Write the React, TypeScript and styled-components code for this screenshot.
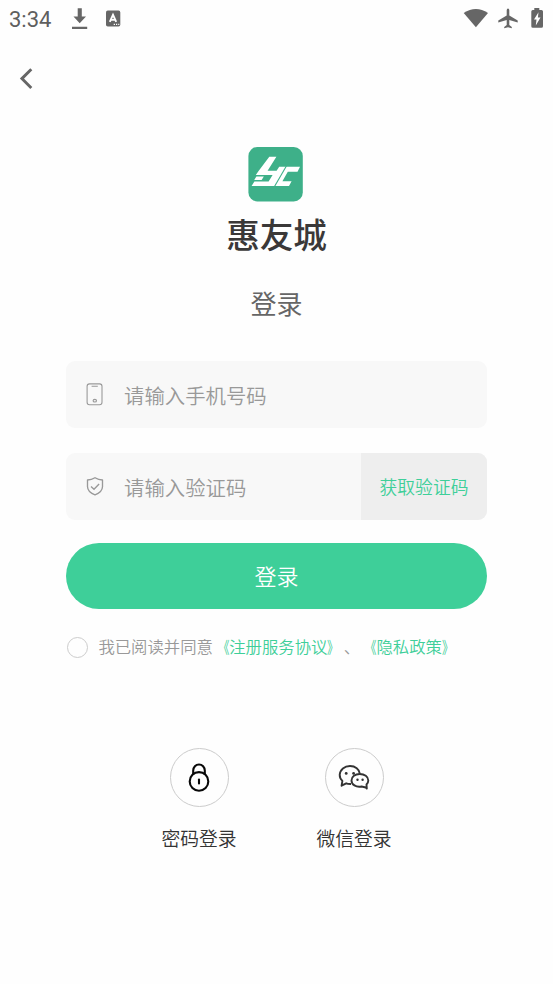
import React from 'react';
import styled, { createGlobalStyle } from 'styled-components';

const Global = createGlobalStyle`
  * { box-sizing: border-box; }
  body { margin: 0; background: #fefefe; font-family: "Noto Sans CJK SC", sans-serif; font-weight: 350; }
  button { font: inherit; border: 0; padding: 0; margin: 0; background: none; }
`;

const Screen = styled.div`
  height: 984px;
  display: flex;
  flex-direction: column;
  align-items: center;
  overflow: hidden;
`;

const StatusBar = styled.header`
  width: 100%;
  height: 40px;
  display: flex;
  align-items: flex-start;
  justify-content: space-between;
`;

const StatusLeft = styled.div`
  display: flex;
  padding-left: 9px;
`;

const Clock = styled.span`
  width: 60px;
  padding-top: 7px;
  font: 400 22px/26px Roboto, sans-serif;
  color: #5f5f5f;
`;

const NavBar = styled.nav`
  width: 100%;
  height: 107px;
  padding: 27px 0 0 18px;
`;

const IconButton = styled.button`
  display: block;
  height: 24px;
`;

const Icon = styled.svg`
  display: block;
  flex: none;
`;

const LogoBox = styled.div`
  margin-right: 2px;
`;

const Brand = styled.h1`
  margin: 6px 0 0;
  height: 52px;
  font-size: 33.6px;
  line-height: 52px;
  font-weight: 500;
  color: #3a3838;
`;

const Heading = styled.h2`
  margin: 23px 0 0;
  height: 40px;
  font-size: 26px;
  line-height: 40px;
  font-weight: 400;
  color: #666;
`;

const Form = styled.form`
  width: 421px;
  margin-top: 38px;
  display: flex;
  flex-direction: column;
`;

const Field = styled.label<{ $gap: number }>`
  height: 67px;
  margin-bottom: ${(p) => p.$gap}px;
  display: flex;
  align-items: center;
  padding-left: 19px;
  border-radius: 9px;
  background: #f8f8f8;
  overflow: hidden;
`;

const Placeholder = styled.span`
  flex: 1;
  margin-left: 19px;
  font-size: 20.4px;
  line-height: 30px;
  color: #999;
`;

const CodeButton = styled.button`
  width: 126px;
  height: 67px;
  padding-bottom: 2px;
  background: #eee;
  color: #3ecf99;
  font-size: 17.8px;
  line-height: 26px;
`;

const Submit = styled.button`
  height: 66px;
  padding-bottom: 2px;
  border-radius: 33px;
  background: #3ecf99;
  color: #fff;
  font-size: 22px;
  line-height: 32px;
`;

const Agreement = styled.div`
  display: flex;
  align-items: center;
  height: 24px;
  margin-top: 26px;
  padding-left: 1.4px;
  font-size: 16.37px;
  line-height: 24px;
  color: #999;
  white-space: nowrap;
`;

const Radio = styled.span`
  width: 21px;
  height: 21px;
  margin-right: 10px;
  border: 1.5px solid #ccc;
  border-radius: 50%;
`;

const AgreementText = styled.span`
  padding-bottom: 2px;
`;

const Link = styled.span`
  color: #3ecf99;
`;

const Bracket = styled.span<{ $side: 'left' | 'right' }>`
  display: inline-block;
  width: 1em;
  font-weight: 400;
  transform: scaleX(0.7);
  transform-origin: ${(p) => (p.$side === 'left' ? 'right' : 'left')} center;
`;

const Alternatives = styled.div`
  width: 310px;
  margin-top: 89px;
  display: grid;
  grid-template-columns: 1fr 1fr;
`;

const Method = styled.button`
  display: flex;
  flex-direction: column;
  align-items: center;
  color: #333;
  font-size: 18.8px;
  line-height: 28px;
`;

const Round = styled.span`
  width: 59px;
  height: 59px;
  margin-bottom: 17px;
  display: flex;
  align-items: center;
  justify-content: center;
  border: 1px solid #ccc;
  border-radius: 50%;
`;

const StatusIcons = () => (
  <Icon width="90" height="40" viewBox="463 0 90 40" fill="#666">
    <path d="M463.7 13.1Q475.9 4.9 488 13.1L475.9 27.3Z" />
    <path d="M506.7 10.2Q506.7 8.4 508 8.4T509.3 10.2V15.5L517.7 20.4V22.5L509.3 20V25.1L511.8 26.9V28.3L508 27.2L504.2 28.3V26.9L506.7 25.1V20L498.3 22.5V20.4L506.7 15.5Z" />
    <path d="M534.3 8H539.3V10H541.5Q543 10 543 11.5V26.3Q543 27.8 541.5 27.8H532.8Q531.3 27.8 531.3 26.3V11.5Q531.3 10 532.8 10H534.3Z" />
    <path fill="#fff" d="M538.5 12.3L534 19.5H536.5L535.8 25.4L540.5 17.6H537.9Z" />
  </Icon>
);

const NoticeIcons = () => (
  <Icon width="55" height="40" viewBox="69 0 55 40">
    <path d="M77.7 8.3H81.8V16.5H86L79.7 23.2L73.5 16.5H77.7ZM72 26.8H87.2V28.9H72Z" fill="#666" />
    <rect x="106" y="10.6" width="14.3" height="16" rx="1.8" fill="#666" />
    <path d="M109.8 21.8L113 14.8L116.2 21.8M111 19.9H115" fill="none" stroke="#fff" strokeWidth="1.9" />
    <path d="M113.7 24.3H115M116 24.3H117.2M118.2 24.3H119.3" stroke="#fff" strokeWidth="1.2" />
  </Icon>
);

const Logo = () => (
  <Icon width="55" height="55" viewBox="0 .7 55 55">
    <rect x=".4" y=".7" width="54.4" height="54.4" rx="9" fill="#3eb089" />
    <path fill="#fff" d="M21.3 10.4H28.4L19.6 24.4H28.6L31.2 20.4H52L49.5 25.4H39.8L34.4 35H43.6L41 39.6H3.6L6.4 35.2H20.6L24.6 28.8H7.8L10.2 25.2Z" />
    <path fill="#fff" d="M8.4 30.2H15.8L13.6 33.8H6.2Z" />
    <path d="M38.4 19.7L26.5 40.2" stroke="#3eb089" strokeWidth="1.1" />
  </Icon>
);

const PhoneIcon = () => (
  <Icon width="20" height="24" viewBox="0 .5 20 24" fill="none" stroke="#999" strokeWidth="1.1">
    <rect x="2.1" y="1.4" width="14.9" height="20.8" rx="2.4" />
    <path d="M6.6 3.8H12.8" />
    <ellipse cx="9.8" cy="18.2" rx="1.7" ry="1.3" />
  </Icon>
);

const ShieldIcon = () => (
  <Icon width="20" height="24" viewBox="0 .3 20 24" fill="none" stroke="#999" strokeWidth="1.35">
    <path d="M10 3.1Q13.5 5.3 17.5 5.3V12Q17.3 17.3 10 20.2Q2.7 17.3 2.5 12V5.3Q6.5 5.3 10 3.1Z" strokeLinejoin="round" />
    <path d="M6 11.8L9 14.6L14.1 9.3" />
  </Icon>
);

const LockIcon = () => (
  <Icon width="32" height="32" viewBox="0 0 32 32" fill="none" stroke="#080808" strokeWidth="2.1">
    <circle cx="16" cy="19.4" r="9.3" />
    <path d="M10.2 12.4V8.6A5.8 6.1 0 0 1 21.8 8.6V12.4" />
    <path d="M16 17.6V21.4" strokeLinecap="round" />
  </Icon>
);

const WeChatIcon = () => (
  <Icon width="34" height="32" viewBox="0 .7 34 32" fill="none" stroke="#333" strokeWidth="1.9" strokeLinejoin="round">
    <path d="M14 22.7Q10.8 22.8 9.2 22L4.6 24.4L5.4 19.6Q2.6 17.1 2.7 13.5C3 8.2 7.5 4.7 13 4.7C18.4 4.7 22.3 7.9 22.8 12.3" />
    <path d="M28.9 26.2L24.5 25.2C19 26.3 14.5 23.2 14.5 19.1C14.5 15.1 18.1 12.7 22.7 12.7C27.5 12.7 31.3 15.4 31.3 19.2Q31.3 21.4 29.5 23.2L29.8 27.2Z" />
    <g fill="#333" stroke="none">
      <circle cx="9.2" cy="12.1" r="1.4" />
      <circle cx="16.6" cy="12.1" r="1.4" />
      <circle cx="20.5" cy="18.5" r="1.2" />
      <circle cx="25.6" cy="18.5" r="1.2" />
    </g>
  </Icon>
);

const Policy = ({ name }: { name: string }) => (
  <Link>
    <Bracket $side="left">《</Bracket>
    {name}
    <Bracket $side="right">》</Bracket>
  </Link>
);

export default function App() {
  return (
    <>
      <Global />
      <Screen lang="zh-CN">
        <StatusBar>
          <StatusLeft>
            <Clock>3:34</Clock>
            <NoticeIcons />
          </StatusLeft>
          <StatusIcons />
        </StatusBar>
        <NavBar>
          <IconButton aria-label="返回">
            <Icon width="20" height="24" viewBox="0 0 20 24" fill="none" stroke="#666" strokeWidth="2.9">
              <path d="M13.3 2.2L3.9 11.6L13.3 21" />
            </Icon>
          </IconButton>
        </NavBar>
        <LogoBox><Logo /></LogoBox>
        <Brand>惠友城</Brand>
        <Heading>登录</Heading>
        <Form>
          <Field $gap={25}>
            <PhoneIcon />
            <Placeholder>请输入手机号码</Placeholder>
          </Field>
          <Field $gap={23}>
            <ShieldIcon />
            <Placeholder>请输入验证码</Placeholder>
            <CodeButton type="button">获取验证码</CodeButton>
          </Field>
          <Submit type="button">登录</Submit>
          <Agreement>
            <Radio />
            <AgreementText>
              我已阅读并同意<Policy name="注册服务协议" />、<Policy name="隐私政策" />
            </AgreementText>
          </Agreement>
        </Form>
        <Alternatives>
          <Method>
            <Round><LockIcon /></Round>
            密码登录
          </Method>
          <Method>
            <Round><WeChatIcon /></Round>
            微信登录
          </Method>
        </Alternatives>
      </Screen>
    </>
  );
}
